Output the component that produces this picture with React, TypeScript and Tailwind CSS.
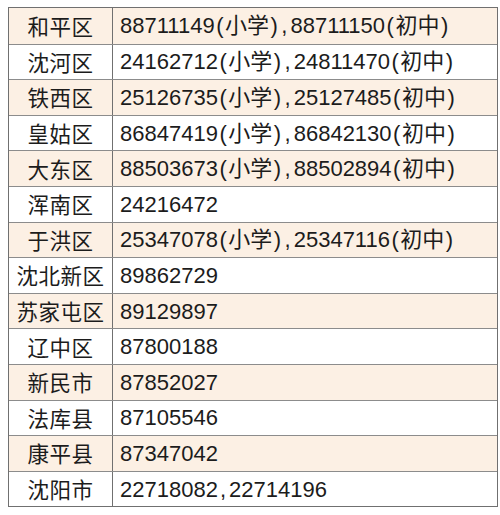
import React from "react";

type Row = { name: string; phone: React.ReactNode };

const P = ({ c }: { c: string }) => <span className="mx-[1.5px]">{c}</span>;
const C = () => <span className="mr-[3px] ml-[2px]">,</span>;

const two = (a: string, b: string) => (
  <>
    {a}
    <P c="(" />
    小学
    <P c=")" />
    <C />
    {b}
    <P c="(" />
    初中
    <P c=")" />
  </>
);

const rows: Row[] = [
  { name: "和平区", phone: two("88711149", "88711150") },
  { name: "沈河区", phone: two("24162712", "24811470") },
  { name: "铁西区", phone: two("25126735", "25127485") },
  { name: "皇姑区", phone: two("86847419", "86842130") },
  { name: "大东区", phone: two("88503673", "88502894") },
  { name: "浑南区", phone: "24216472" },
  { name: "于洪区", phone: two("25347078", "25347116") },
  { name: "沈北新区", phone: "89862729" },
  { name: "苏家屯区", phone: "89129897" },
  { name: "辽中区", phone: "87800188" },
  { name: "新民市", phone: "87852027" },
  { name: "法库县", phone: "87105546" },
  { name: "康平县", phone: "87347042" },
  {
    name: "沈阳市",
    phone: (
      <>
        22718082
        <C />
        22714196
      </>
    ),
  },
];

export default function App() {
  return (
    <div className="w-[500px] h-[515px] bg-white pt-[7px] pl-[8px]">
      <div
        className="w-[490px] border-[1.5px] border-[#707070] text-[#1c1c1c] text-[22px]"
        style={{ fontFamily: '"Liberation Sans", "Noto Sans CJK SC", sans-serif' }}
      >
        {rows.map((r, i) => (
          <div
            key={r.name}
            className={`flex h-[35.6px] ${i > 0 ? "border-t-[1.5px] border-[#8c8c8c]" : ""} ${
              i % 2 === 0 ? "bg-[#fcf0e4]" : "bg-white"
            }`}
          >
            <div
              className="w-[104px] flex items-center justify-center border-r-[1.5px] border-[#707070] text-[21.5px] tracking-[0.5px]"
              style={{ fontFamily: '"Noto Sans CJK SC", sans-serif' }}
            >
              {r.name}
            </div>
            <div className="flex-1 flex items-center pl-[7px] whitespace-nowrap">{r.phone}</div>
          </div>
        ))}
      </div>
    </div>
  );
}
